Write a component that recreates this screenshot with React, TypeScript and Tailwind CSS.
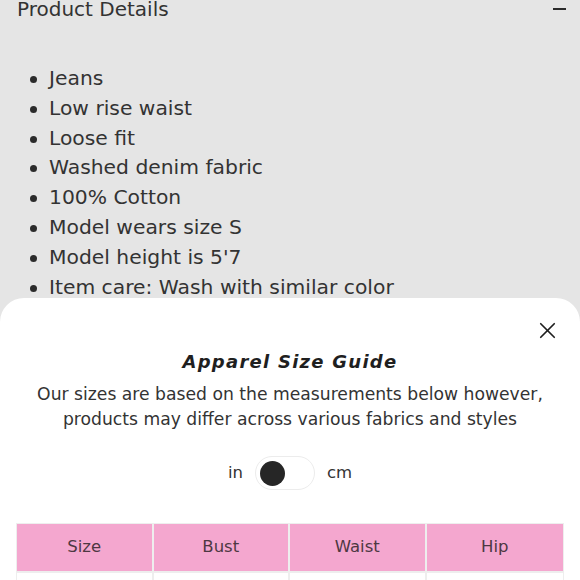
import { X } from "lucide-react";

const details = [
  "Jeans",
  "Low rise waist",
  "Loose fit",
  "Washed denim fabric",
  "100% Cotton",
  "Model wears size S",
  "Model height is 5'7",
  "Item care: Wash with similar color",
];

const columns = ["Size", "Bust", "Waist", "Hip"];

export default function App() {
  return (
    <div
      className="w-[580px] h-[580px] overflow-hidden bg-[#e5e5e5] text-[#2e2e2e]"
      style={{ fontFamily: '"DejaVu Sans", sans-serif' }}
    >
      <div className="h-[298px] flex flex-col">
        <div className="flex items-center justify-between pl-[17px] pr-[14px] -mt-[5px] h-[28px]">
          <span className="text-[20px] text-[#333]">Product Details</span>
          <span className="block w-[13px] h-[1.5px] bg-[#2b2b2b]" />
        </div>
        <ul className="mt-[41px] pl-[49px] text-[20.3px] leading-[29.8px] text-[#333]">
          {details.map((d) => (
            <li key={d} className="relative">
              <span className="absolute -left-[19px] top-[12px] w-[7px] h-[7px] rounded-full bg-[#2b2b2b]" />
              {d}
            </li>
          ))}
        </ul>
      </div>

      <div className="bg-white rounded-t-[24px] h-[282px] px-[16px]">
        <div className="flex justify-end pt-[19px] pr-[3px]">
          <X size={27} strokeWidth={1.5} className="text-[#1f1f1f]" />
        </div>
        <h2 className="text-center text-[18px] leading-[24px] font-bold italic tracking-[0.07em] text-[#1f1f1f] mt-[6px]">
          Apparel Size Guide
        </h2>
        <p className="text-center text-[17.2px] leading-[25px] mt-[8px] text-[#333]">
          Our sizes are based on the measurements below however,
          <br />
          products may differ across various fabrics and styles
        </p>
        <div className="flex items-center justify-center gap-[12px] mt-[24px] text-[16.5px] text-[#333]">
          <span>in</span>
          <span className="flex items-center w-[60px] h-[34px] rounded-full border border-[#ececec] px-[4px]">
            <span className="w-[25px] h-[25px] rounded-full bg-[#262626]" />
          </span>
          <span>cm</span>
        </div>
        <div className="mt-[33px] border border-[#eeeeee] grid grid-cols-4">
          {columns.map((c, i) => (
            <div
              key={c}
              className={`h-[47px] bg-[#f4a7cf] flex items-center justify-center text-[16.5px] text-[#4d3842] ${
                i < 3 ? "border-r-2 border-[#eeeeee]" : ""
              }`}
            >
              {c}
            </div>
          ))}
          {columns.map((c, i) => (
            <div
              key={c + "-row"}
              className={`h-[40px] bg-white border-t-2 border-[#eeeeee] ${i < 3 ? "border-r-2" : ""}`}
            />
          ))}
        </div>
      </div>
    </div>
  );
}
